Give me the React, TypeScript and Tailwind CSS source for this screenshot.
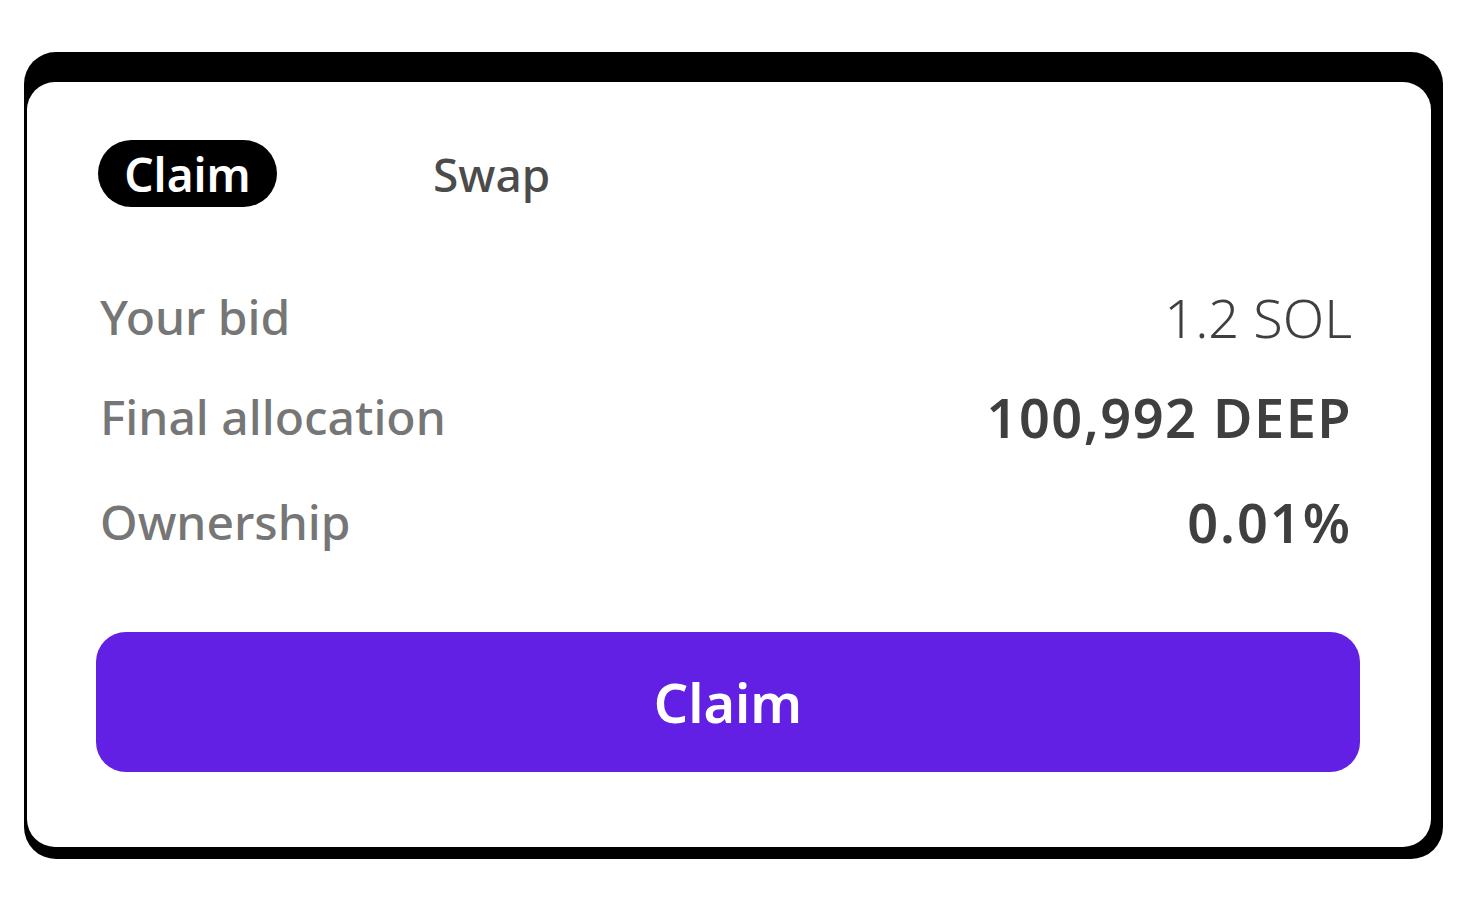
import React from 'react';

const rows = [
  { label: 'Your bid', value: '1.2 SOL', weight: 'font-light', extra: '' },
  { label: 'Final allocation', value: '100,992 DEEP', weight: 'font-semibold tracking-[1.5px]', extra: '' },
  { label: 'Ownership', value: '0.01%', weight: 'font-semibold tracking-[2px]', extra: 'mt-[5px]' },
];

export default function App() {
  return (
    <div
      className="min-h-screen bg-white pt-[52px] pl-[24px] pr-[21px] pb-[40px]"
      style={{ fontFamily: '"Noto Sans", "Open Sans", sans-serif' }}
    >
      {/* offset black frame */}
      <div className="rounded-[32px] bg-black pt-[30px] pl-[3px] pr-[12px] pb-[12px]">
        <div className="rounded-[28px] bg-white pt-[58px] pl-[69px] pr-[71px] pb-[75px]">
          {/* Tabs */}
          <div className="flex items-center h-[67px] ml-[2px]">
            <button className="w-[179px] h-[67px] rounded-full bg-black text-white text-[46px] font-semibold leading-none flex items-center justify-center">
              Claim
            </button>
            <button className="ml-[156px] text-[46px] font-medium leading-none text-[#4b4b4b]">
              Swap
            </button>
          </div>

          {/* Stats */}
          <div className="mt-[60px] flex flex-col">
            {rows.map((r) => (
              <div key={r.label} className={`h-[100px] flex items-center justify-between pl-[4px] pr-[8px] ${r.extra}`}>
                <span className="text-[48px] font-medium leading-none text-[#767676]">{r.label}</span>
                <span className={`text-[54px] leading-none text-[#3f3f3f] ${r.weight}`}>{r.value}</span>
              </div>
            ))}
          </div>

          {/* Action */}
          <button className="mt-[60px] w-full h-[140px] rounded-[30px] bg-[#6120E4] text-white text-[54px] font-semibold leading-none">
            Claim
          </button>
        </div>
      </div>
    </div>
  );
}
